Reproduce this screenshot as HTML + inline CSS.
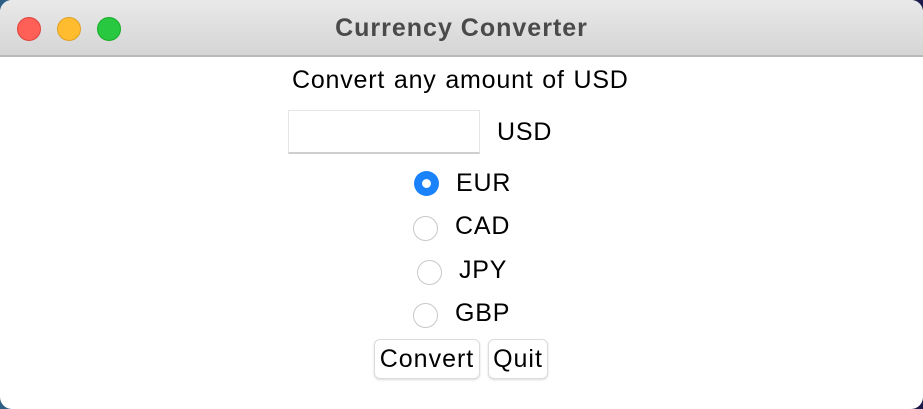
<!DOCTYPE html>
<html><head><meta charset="utf-8"><style>
html,body{margin:0;padding:0;}
body{width:923px;height:409px;background:linear-gradient(90deg,#2d5f86 0%,#3a3a6a 50%,#1c1a4a 100%);overflow:hidden;position:relative;font-family:"Liberation Sans",Arial,sans-serif;}
.win{position:absolute;left:0;top:0;width:923px;height:409px;background:#fff;border-radius:12px;overflow:hidden;}
.title{height:55px;background:linear-gradient(#e9e9e9,#d5d5d5);border-bottom:2px solid #b9b9b9;position:relative;}
.title span{position:absolute;left:0;right:0;top:14px;text-align:center;font-weight:bold;font-size:25px;letter-spacing:1px;color:#4a4a4a;}
.dot{position:absolute;top:17px;width:22px;height:22px;border-radius:50%;}
.t{position:absolute;font-size:25px;letter-spacing:0.8px;word-spacing:1px;color:#000;}
.entry{position:absolute;left:288px;top:110px;width:192px;height:44px;border:1px solid #e6e6e6;border-bottom:2px solid #cfcfcf;box-sizing:border-box;}
.r{position:absolute;width:25px;height:25px;border-radius:50%;border:1px solid #c8c8c8;box-sizing:border-box;background:#fff;}
.r.on{background:#1a82fb;border:none;}
.r.on:after{content:"";position:absolute;left:8px;top:8px;width:9px;height:9px;background:#fff;border-radius:50%;}
.btn{position:absolute;top:339px;height:40px;border:1px solid #dcdcdc;border-radius:6px;box-shadow:0 1px 2px rgba(0,0,0,.15);font-size:25px;letter-spacing:1px;line-height:38px;text-align:center;box-sizing:border-box;background:#fff;}
</style></head><body>
<div class="win">
<div class="title">
<div class="dot" style="left:17px;background:#fe5f57;border:0.5px solid #e0443e"></div>
<div class="dot" style="left:57px;background:#febc2e;border:0.5px solid #dea123"></div>
<div class="dot" style="left:97px;background:#28c840;border:0.5px solid #1aab29"></div>
<span>Currency Converter</span>
</div>
<div class="t" style="left:292px;top:66px">Convert any amount of USD</div>
<div class="entry"></div>
<div class="t" style="left:497px;top:118px">USD</div>
<div class="r on" style="left:414px;top:171px"></div><div class="t" style="left:456px;top:169px">EUR</div>
<div class="r" style="left:413px;top:216px"></div><div class="t" style="left:455px;top:212px">CAD</div>
<div class="r" style="left:417px;top:260px"></div><div class="t" style="left:459px;top:256px">JPY</div>
<div class="r" style="left:413px;top:303px"></div><div class="t" style="left:455px;top:299px">GBP</div>
<div class="btn" style="left:374px;width:106px">Convert</div>
<div class="btn" style="left:488px;width:60px">Quit</div>
</div>
</body></html>
